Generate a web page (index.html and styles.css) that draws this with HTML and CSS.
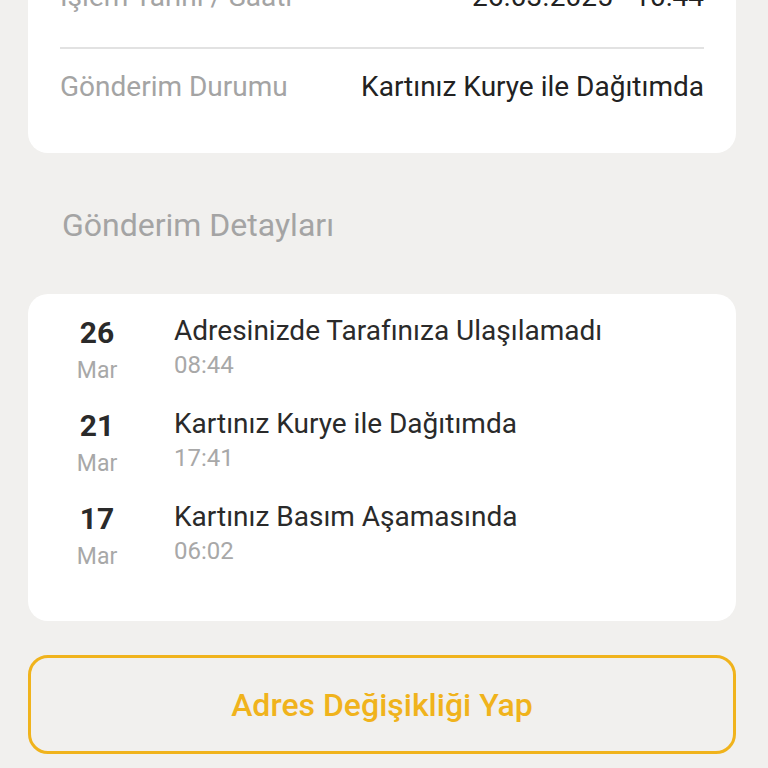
FILE: index.html
```html
<!DOCTYPE html>
<html lang="tr">
<head>
<meta charset="utf-8">
<title>Gönderim Detayları</title>
<link rel="stylesheet" href="styles.css">
</head>
<body>
<main class="page">
  <section class="card info-card">
    <div class="info-row first">
      <span class="info-label">İşlem Tarihi / Saati</span>
      <span class="info-value">26.03.2025 - 10:44</span>
    </div>
    <div class="info-row">
      <span class="info-label">Gönderim Durumu</span>
      <span class="info-value">Kartınız Kurye ile Dağıtımda</span>
    </div>
  </section>

  <h2 class="section-title">Gönderim Detayları</h2>

  <section class="card timeline">
    <div class="event">
      <div class="date"><span class="day">26</span><span class="month">Mar</span></div>
      <div class="desc"><span class="title">Adresinizde Tarafınıza Ulaşılamadı</span><span class="time">08:44</span></div>
    </div>
    <div class="event">
      <div class="date"><span class="day">21</span><span class="month">Mar</span></div>
      <div class="desc"><span class="title">Kartınız Kurye ile Dağıtımda</span><span class="time">17:41</span></div>
    </div>
    <div class="event">
      <div class="date"><span class="day">17</span><span class="month">Mar</span></div>
      <div class="desc"><span class="title">Kartınız Basım Aşamasında</span><span class="time">06:02</span></div>
    </div>
  </section>

  <button class="action-btn" type="button">Adres Değişikliği Yap</button>
</main>
</body>
</html>
```

FILE: styles.css
```css
html, body {
  margin: 0;
  padding: 0;
  background: #f1f0ee;
}
body {
  font-family: Roboto, "Liberation Sans", sans-serif;
  overflow: hidden;
}
.page {
  display: flex;
  flex-direction: column;
  padding: 0 32px 0 28px;
}
.card {
  background: #ffffff;
  border-radius: 20px;
}
.info-card {
  margin-top: -37px;
  padding: 0 32px 28px;
}
.info-row {
  display: flex;
  justify-content: space-between;
  align-items: center;
  padding: 24px 0;
  line-height: 28px;
  font-size: 28px;
}
.info-row.first {
  padding-top: 20px;
  padding-bottom: 36px;
  border-bottom: 2px solid #e2e2e2;
}
.info-label {
  color: #a4a4a4;
}
.info-value {
  color: #222222;
}
.section-title {
  margin: 52px 0 0 34px;
  height: 89px;
  font-weight: 400;
  font-size: 32px;
  line-height: 40px;
  color: #a4a4a4;
}
.timeline {
  padding: 20px 0 28px;
  display: flex;
  flex-direction: column;
}
.event {
  display: flex;
  align-items: flex-start;
  height: 93px;
}
.date {
  width: 146px;
  display: flex;
  flex-direction: column;
  align-items: center;
  box-sizing: border-box;
  padding-right: 8px;
}
.day {
  font-weight: 700;
  font-size: 30px;
  line-height: 38px;
  color: #2a2a2a;
}
.month {
  font-size: 23px;
  line-height: 38px;
  color: #a8a8a8;
}
.desc {
  display: flex;
  flex-direction: column;
}
.title {
  font-size: 28px;
  line-height: 34px;
  color: #2a2a2a;
}
.time {
  font-size: 24px;
  line-height: 34px;
  color: #a8a8a8;
}
.action-btn {
  margin-top: 34px;
  height: 99px;
  border: 3px solid #f0b31c;
  border-radius: 20px;
  background: transparent;
  color: #f0b31c;
  font-family: Roboto, "Liberation Sans", sans-serif;
  font-weight: 500;
  font-size: 32px;
}
```
